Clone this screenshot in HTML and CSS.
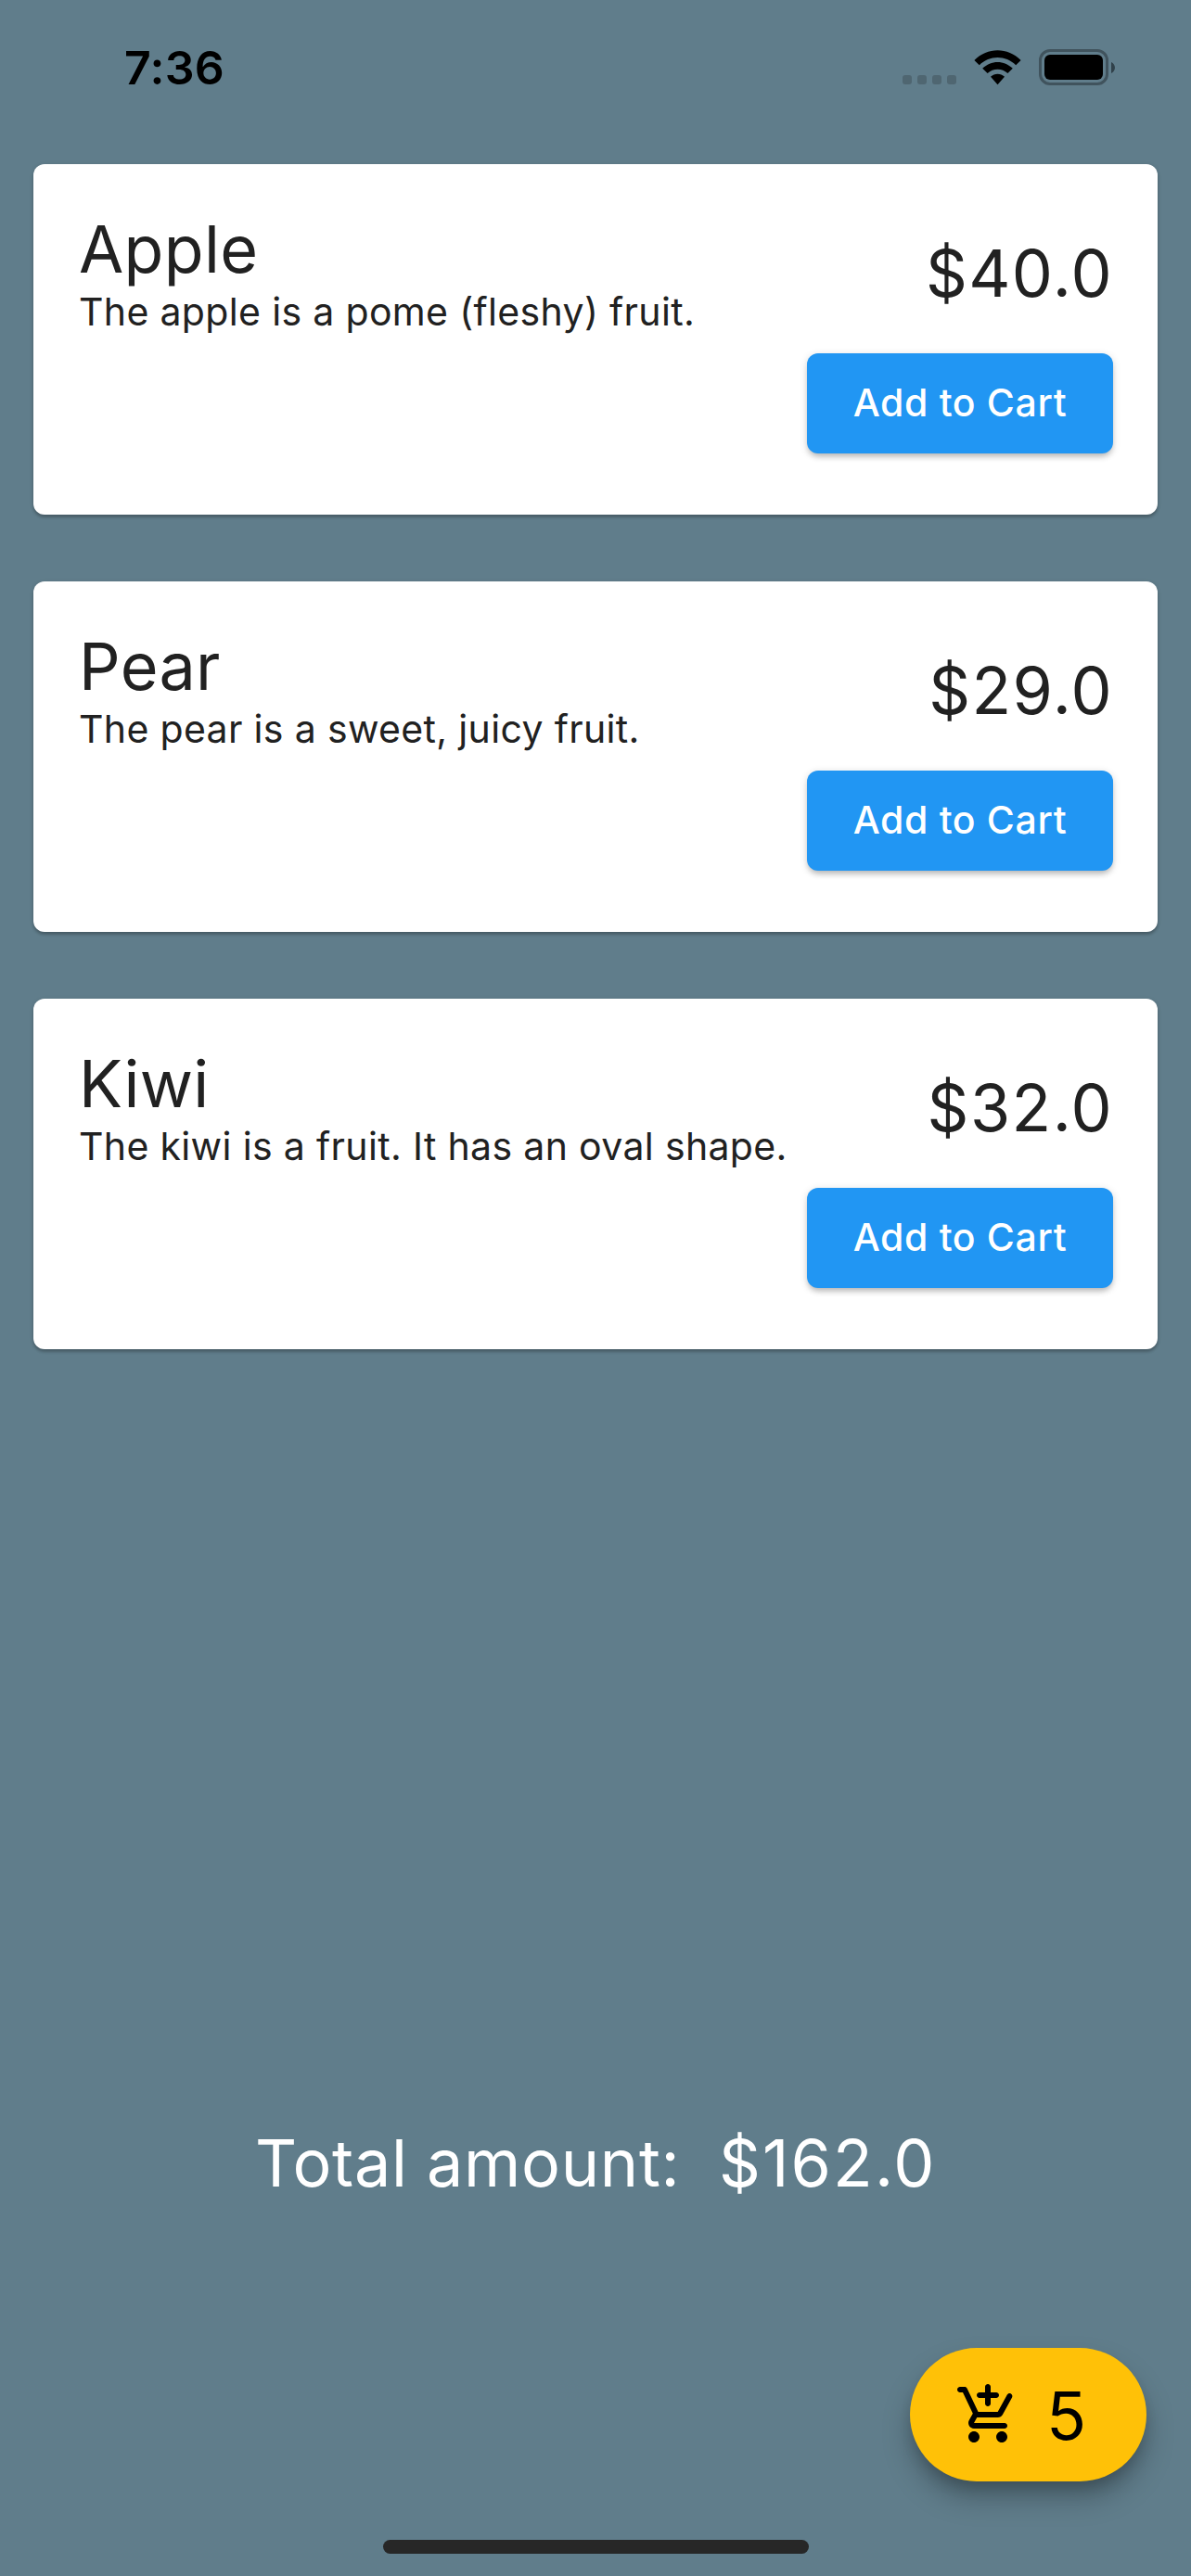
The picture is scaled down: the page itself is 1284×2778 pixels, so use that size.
FILE: index.html
```html
<!DOCTYPE html>
<html lang="en">
<head>
<meta charset="utf-8">
<title>Fruit Shop</title>
<link rel="stylesheet" href="styles.css">
</head>
<body>
<div class="screen">
  <header class="status">
    <span class="time">7:36</span>
    <div class="indicators">
      <div class="dots"><i></i><i></i><i></i><i></i></div>
      <svg class="wifi" width="51" height="38" viewBox="0 0 51 38">
        <path d="M0.4 10.9 C14.5 -3.4 36.5 -3.4 50.6 10.9 L45.2 16.2 C34.2 5.2 16.8 5.2 5.8 16.2 Z"/>
        <path d="M9.2 19.8 C18.3 10.6 32.7 10.6 41.8 19.8 L36.4 25.1 C30.3 19.2 20.7 19.2 14.6 25.1 Z"/>
        <path d="M18 28.7 C22.3 24.8 28.7 24.8 33 28.7 L25.5 37.3 Z"/>
      </svg>
      <div class="battery">
        <div class="battery-body"><div class="battery-fill"></div></div>
        <svg class="battery-tip" width="4" height="12" viewBox="0 0 4 12"><path d="M0 0C2.400 1.200 4 3.500 4 6S2.400 10.800 0 12Z"/></svg>
      </div>
    </div>
  </header>

  <main class="products">
    <article class="card">
      <div class="info">
        <h2 class="name">Apple</h2>
        <p class="description">The apple is a pome (fleshy) fruit.</p>
      </div>
      <div class="buy">
        <span class="price">$40.0</span>
        <button class="add">Add to Cart</button>
      </div>
    </article>
    <article class="card">
      <div class="info">
        <h2 class="name">Pear</h2>
        <p class="description">The pear is a sweet, juicy fruit.</p>
      </div>
      <div class="buy">
        <span class="price">$29.0</span>
        <button class="add">Add to Cart</button>
      </div>
    </article>
    <article class="card">
      <div class="info">
        <h2 class="name">Kiwi</h2>
        <p class="description">The kiwi is a fruit. It has an oval shape.</p>
      </div>
      <div class="buy">
        <span class="price">$32.0</span>
        <button class="add">Add to Cart</button>
      </div>
    </article>
  </main>

  <section class="total">
    <span class="total-label">Total amount:</span>
    <span class="total-value">$162.0</span>
  </section>

  <footer class="bottom">
    <button class="cart">
      <svg width="72" height="72" viewBox="0 0 24 24">
        <path d="M12 9c.55 0 1-.45 1-1V6h2c.55 0 1-.45 1-1s-.45-1-1-1h-2V2c0-.55-.45-1-1-1s-1 .45-1 1v2H9c-.55 0-1 .45-1 1s.45 1 1 1h2v2c0 .55.45 1 1 1zm-5 9c-1.100 0-1.990.9-1.990 2S5.900 22 7 22s2-.9 2-2-.9-2-2-2zm10 0c-1.100 0-1.990.9-1.990 2s.89 2 1.990 2 2-.9 2-2-.9-2-2-2zm-8.900-5h7.450c.75 0 1.410-.41 1.750-1.030l3.380-6.130c.27-.48.09-1.090-.39-1.360-.48-.26-1.090-.09-1.350.39L15.550 11H8.530L4.540 2.570C4.380 2.220 4.020 2 3.640 2H2c-.55 0-1 .45-1 1s.45 1 1 1h1l3.600 7.590-1.350 2.440C4.520 15.370 5.480 17 7 17h11c.55 0 1-.45 1-1s-.45-1-1-1H7l1.100-2z"/>
      </svg>
      <span class="count">5</span>
    </button>
    <div class="home-indicator"></div>
  </footer>
</div>
</body>
</html>
```
FILE: styles.css
```css
* {
  box-sizing: border-box;
  margin: 0;
  padding: 0;
}

body {
  font-family: Inter, "Liberation Sans", sans-serif;
  background: #607d8b;
}

button {
  border: 0;
  font-family: inherit;
}

svg {
  display: block;
}

.screen {
  display: flex;
  flex-direction: column;
  width: 1284px;
  height: 2778px;
  overflow: hidden;
  background: #607d8b;
}

.status {
  display: flex;
  justify-content: space-between;
  height: 141px;
  padding: 43px 82px 0 134px;
  color: #000;
}

.time {
  font-size: 50px;
  font-weight: 600;
  line-height: 60px;
  letter-spacing: 0.3px;
}

.indicators {
  display: flex;
  align-items: flex-start;
  height: 49px;
  padding-top: 10px;
}

.dots {
  display: flex;
  gap: 6px;
  margin: 28px 19px 0 0;
}

.dots i {
  width: 10px;
  height: 10px;
  border-radius: 3px;
  background: #4f6671;
}

.wifi {
  margin: 1px 19px 0 0;
}

.battery {
  display: flex;
  align-items: center;
  gap: 3px;
}

.battery-body {
  width: 75px;
  height: 39px;
  padding: 3px;
  border: 3px solid #40535d;
  border-radius: 12px;
}

.battery-fill {
  height: 27px;
  border-radius: 6px;
  background: #000;
}

.battery-tip {
  fill: #30414a;
}

.products {
  display: flex;
  flex-direction: column;
  gap: 72px;
  padding: 36px;
}

.card {
  display: flex;
  justify-content: space-between;
  height: 378px;
  padding: 50px 48px 0;
  border-radius: 12px;
  background: #fff;
  box-shadow: 0 3px 3px rgba(0, 0, 0, 0.2), 0 1px 5px rgba(0, 0, 0, 0.12);
  color: #212121;
}

.name {
  padding-left: 1px;
  font-size: 70px;
  font-weight: 400;
  line-height: 84px;
  letter-spacing: 0.3px;
}

.description {
  padding-left: 1px;
  font-size: 41px;
  line-height: 50px;
  letter-spacing: 0.34px;
  white-space: nowrap;
}

.buy {
  display: flex;
  flex-direction: column;
  align-items: flex-end;
  gap: 44px;
  padding-top: 26px;
}

.price {
  font-size: 70px;
  line-height: 84px;
  letter-spacing: 1.4px;
}

.add {
  width: 330px;
  height: 108px;
  padding-bottom: 2px;
  border-radius: 12px;
  background: #2196f3;
  box-shadow: 0 5px 6px -2px rgba(0, 0, 0, 0.2), 0 2px 8px rgba(0, 0, 0, 0.16);
  color: #fff;
  font-size: 41px;
  font-weight: 550;
  letter-spacing: 0.65px;
}

.total {
  display: flex;
  gap: 45px;
  margin-top: 800px;
  padding-left: 275px;
  color: #fff;
  font-size: 70px;
  line-height: 84px;
  white-space: nowrap;
}

.total-label {
  width: 455px;
  letter-spacing: 0.7px;
}

.total-value {
  letter-spacing: 2.1px;
}

.bottom {
  display: flex;
  flex-direction: column;
  align-items: center;
  gap: 63px;
  margin-top: auto;
  padding: 0 48px 24px;
}

.cart {
  display: flex;
  align-items: center;
  align-self: flex-end;
  gap: 27px;
  width: 255px;
  height: 144px;
  padding-left: 48px;
  border-radius: 72px;
  background: #ffc107;
  box-shadow: 0 18px 30px rgba(0, 0, 0, 0.25), 0 10px 15px -4px rgba(0, 0, 0, 0.18);
  color: #000;
}

.count {
  padding-top: 2px;
  font-size: 71px;
  font-weight: 430;
  line-height: 86px;
}

.home-indicator {
  width: 459px;
  height: 15px;
  border-radius: 8px;
  background: #272727;
}
```
